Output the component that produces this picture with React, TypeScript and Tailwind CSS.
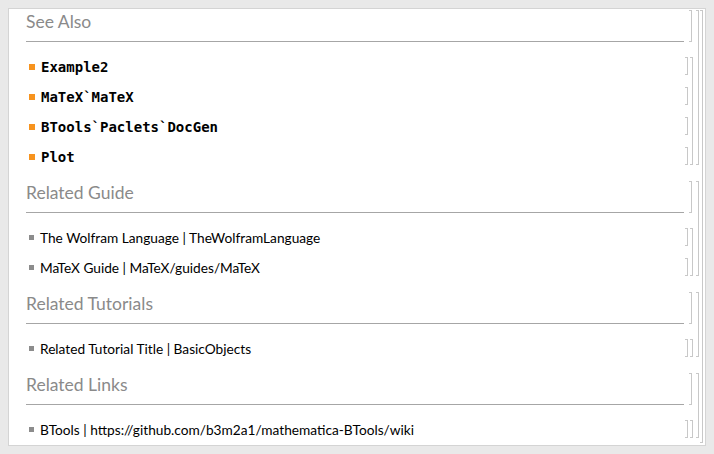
import React from "react";

const Bracket = ({ className = "" }: { className?: string }) => (
  <div className={"w-[3px] shrink-0 border-y border-r border-[#c8c8c8] " + className} />
);

const Header = ({ title }: { title: string }) => (
  <div className="flex h-[32px] gap-[5px]">
    <div className="flex-1 h-[32px] pt-[2px] border-b border-[#a6a6a6] text-[17.5px] leading-[20px] text-[#8a8a8a] font-['Lato',sans-serif]">
      {title}
    </div>
    <Bracket />
  </div>
);

type Item = { text: string; code?: boolean };

const ItemRow = ({ item }: { item: Item }) => (
  <div className="flex h-[18px] gap-[5px]">
    <div className="flex-1 flex items-center pt-[1px]">
      {item.code ? (
        <div className="ml-[3px] w-[6px] h-[6px] bg-[#f7931e] shrink-0" />
      ) : (
        <div className="ml-[3px] w-[5px] h-[5px] bg-[#8c8c8c] shrink-0" />
      )}
      {item.code ? (
        <span className="ml-[6px] font-['DejaVu_Sans_Mono',monospace] font-bold text-[14px] text-black leading-[18px]">
          {item.text}
        </span>
      ) : (
        <span className="ml-[6px] font-['Lato',sans-serif] text-[13.7px] text-black leading-[18px]">
          {item.text}
        </span>
      )}
    </div>
    <Bracket />
  </div>
);

const Section = ({ title, items }: { title: string; items: Item[] }) => (
  <div className="flex gap-[1px]">
    <div className="flex-1 flex flex-col gap-[15px]">
      <div className="pr-[1px]">
        <Header title={title} />
      </div>
      <div className="flex gap-[2px]">
        <div className="flex-1 flex flex-col gap-[12px]">
          {items.map((it) => (
            <ItemRow key={it.text} item={it} />
          ))}
        </div>
        <Bracket />
      </div>
    </div>
    <div className="pl-[2px] flex">
      <Bracket />
    </div>
  </div>
);

export default function App() {
  const sections: { title: string; items: Item[] }[] = [
    {
      title: "See Also",
      items: [
        { text: "Example2", code: true },
        { text: "MaTeX`MaTeX", code: true },
        { text: "BTools`Paclets`DocGen", code: true },
        { text: "Plot", code: true },
      ],
    },
    {
      title: "Related Guide",
      items: [
        { text: "The Wolfram Language | TheWolframLanguage" },
        { text: "MaTeX Guide | MaTeX/guides/MaTeX" },
      ],
    },
    {
      title: "Related Tutorials",
      items: [{ text: "Related Tutorial Title | BasicObjects" }],
    },
    {
      title: "Related Links",
      items: [{ text: "BTools | https://github.com/b3m2a1/mathematica-BTools/wiki" }],
    },
  ];
  return (
    <div className="w-[714px] h-[454px] bg-[#e9e9e9] pt-[8px] pl-[8px] pr-[8px] pb-[8px]">
      <div className="h-full border border-[#d4d4d4] bg-white flex pt-[1px] pb-[2px] pl-[17px] pr-[2px] gap-[1px]">
        <div className="flex-1 flex flex-col gap-[16px]">
          {sections.map((s) => (
            <Section key={s.title} title={s.title} items={s.items} />
          ))}
        </div>
        <Bracket />
      </div>
    </div>
  );
}
